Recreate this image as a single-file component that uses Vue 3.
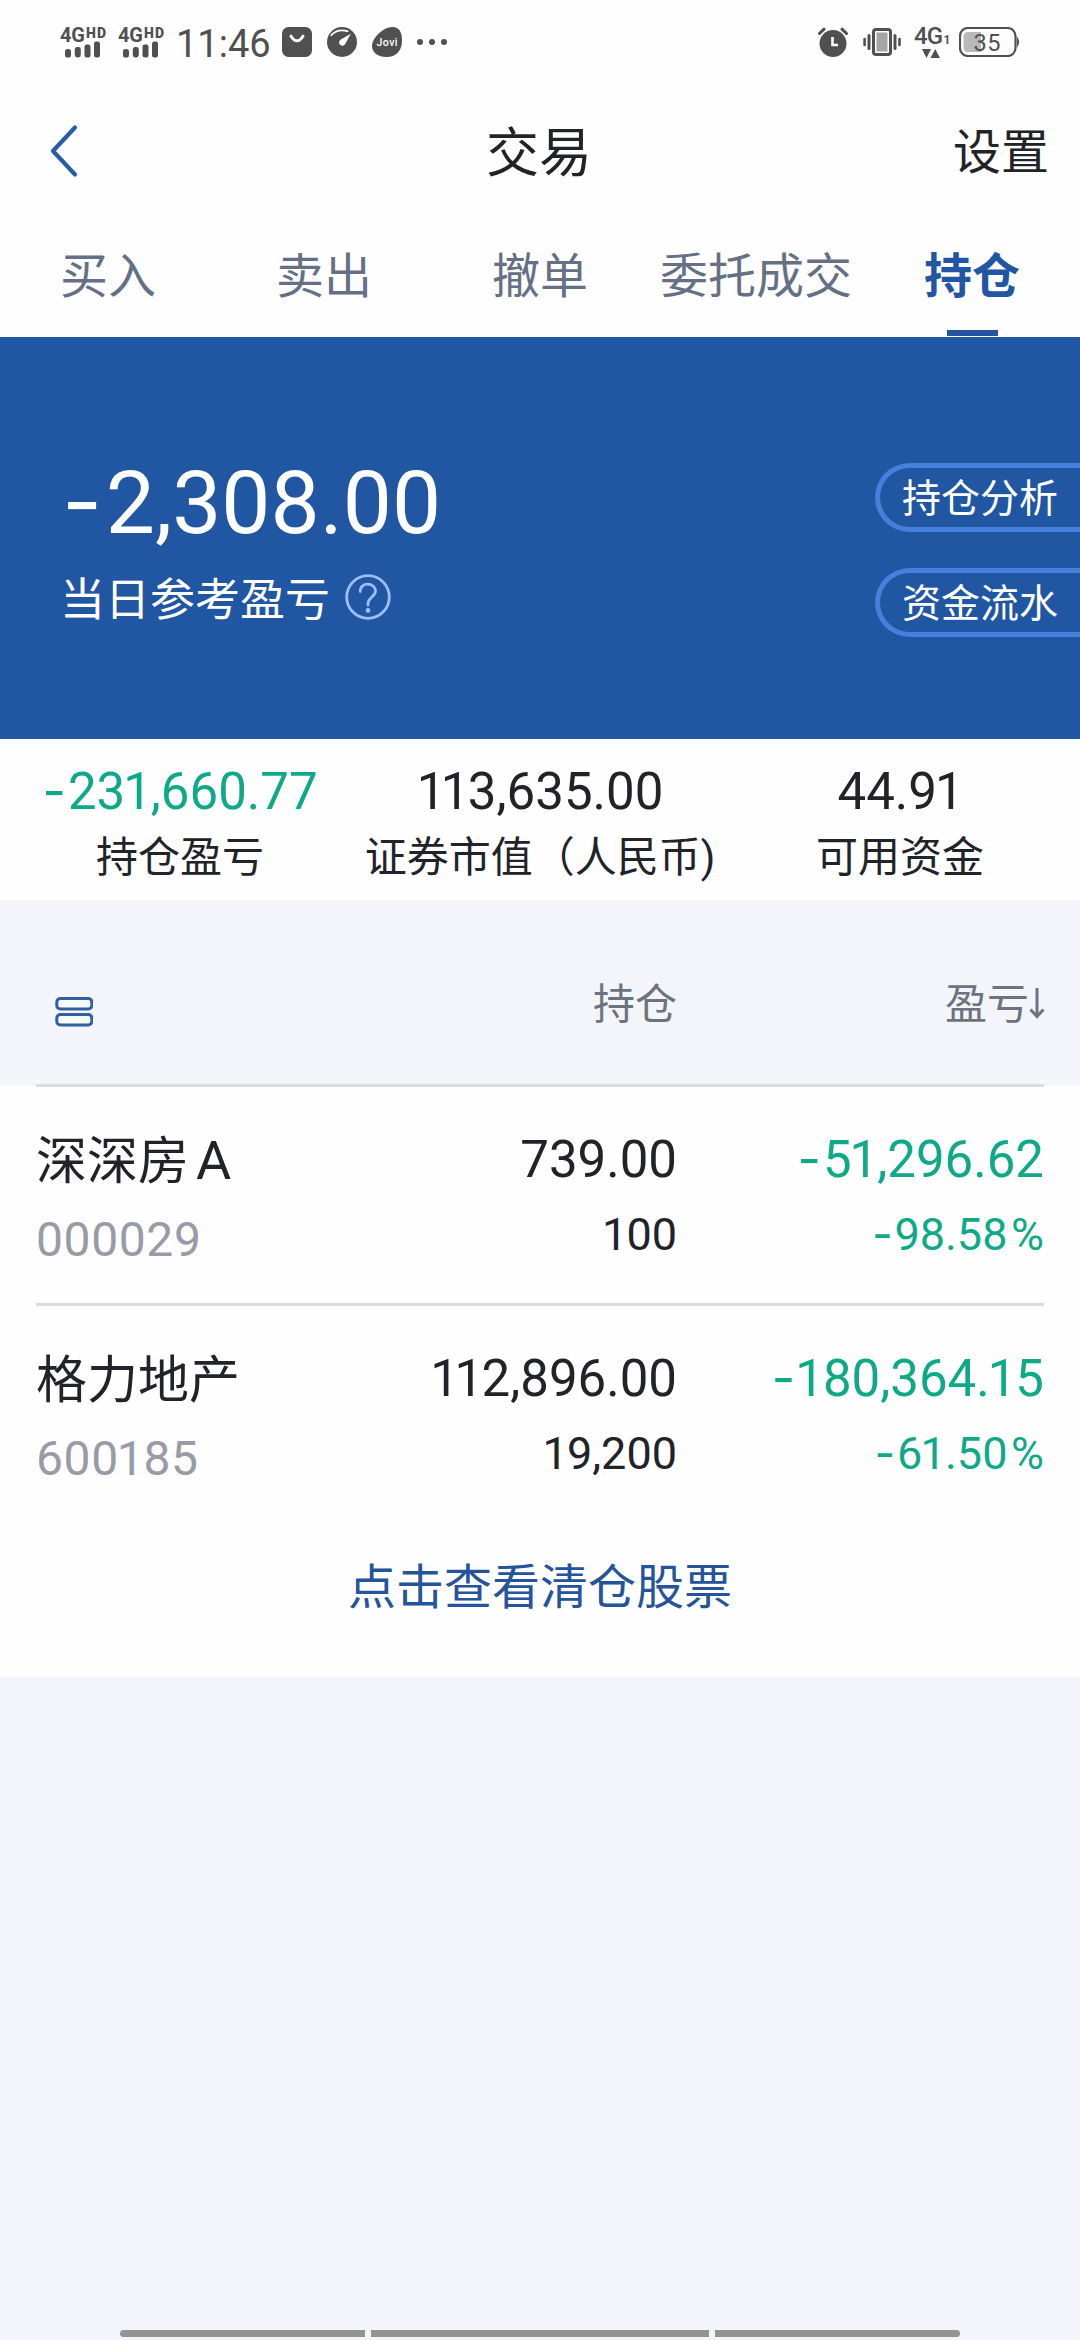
<script setup>
import { h } from 'vue'

const glyphClass = { '-': 'num-minus', '1': 'num-one', '11': 'num-ones', '%': 'num-percent' }

// Splits an amount so that the minus sign, the percent sign and the narrow "1" get their own metrics.
const Num = (props) =>
  h(
    'span',
    { class: 'num' },
    props.value
      .split(/(-|%|1+)/)
      .filter(Boolean)
      .map((part) => (glyphClass[part] ? h('span', { class: glyphClass[part] }, part) : part))
  )
Num.props = ['value']

const tabs = ['买入', '卖出', '撤单', '委托成交', '持仓']
const activeTab = '持仓'

const actions = ['持仓分析', '资金流水']

const stats = [
  { value: '-231,660.77', label: '持仓盈亏', loss: true },
  { value: '113,635.00', label: '证券市值（人民币)' },
  { value: '44.91', label: '可用资金' }
]

const holdings = [
  { name: '深深房', suffix: 'A', code: '000029', amount: '739.00', shares: '100', profit: '-51,296.62', rate: '-98.58%' },
  { name: '格力地产', code: '600185', amount: '112,896.00', shares: '19,200', profit: '-180,364.15', rate: '-61.50%' }
]
</script>

<template>
  <div class="screen">
    <header class="status">
      <div class="status-left">
        <svg v-for="n in 2" :key="n" class="signal" width="48" height="42" viewBox="0 -4 48 42">
          <text x="0" y="17" font-size="20" font-weight="700" textLength="25">4G</text>
          <text x="26" y="12.500" font-size="14" font-weight="900" textLength="20">HD</text>
          <rect x="5" y="24" width="6" height="8.500" rx="2.600" />
          <rect x="14.800" y="22" width="6" height="10.500" rx="2.400" />
          <rect x="24.500" y="19.500" width="6" height="13" rx="2.200" />
          <rect x="34" y="16.500" width="6" height="16" rx="2.200" />
        </svg>
        <span class="clock">11:46</span>
        <svg class="bag" width="30" height="30" viewBox="0 0 30 30">
          <rect width="30" height="30" rx="6.500" />
          <path d="M9 9.200Q15 18.500 21 9.200" fill="none" stroke="#fff" stroke-width="3" stroke-linecap="round" />
        </svg>
        <svg class="gauge" width="30" height="30" viewBox="0 0 30 30">
          <circle cx="15" cy="15" r="15" />
          <path d="M4.300 8.200C9 2.800 15 2.600 20.500 4.200" fill="none" stroke="#fff" stroke-width="1.800" stroke-linecap="round" />
          <path d="M23.800 6.800 18.400 16.800A3.300 3.300 0 1 1 13.400 12.800Z" fill="#fff" />
        </svg>
        <svg class="jovi" width="30" height="30" viewBox="0 0 30 30">
          <path d="M20.500 0C27 0 30 5 30 13.500C30 24 24 30 14.500 30C6 30 0 25.500 0 19C0 11 11 0 20.500 0Z" />
          <text x="4.500" y="18.800" font-size="10.500" font-weight="500" textLength="21" fill="#fff">Jovi</text>
        </svg>
        <svg class="more" width="30" height="8" viewBox="0 0 30 8">
          <circle cx="3" cy="4" r="3" />
          <circle cx="15" cy="4" r="3" />
          <circle cx="27" cy="4" r="3" />
        </svg>
      </div>
      <div class="status-right">
        <svg class="alarm" width="30" height="30" viewBox="0 0 30 30">
          <circle cx="15" cy="16.500" r="13.500" />
          <path d="M1.500 6.500 6 2.200M28.500 6.500 24 2.200" stroke="#505050" stroke-width="3" stroke-linecap="round" />
          <path d="M14.500 10V18H20" fill="none" stroke="#fff" stroke-width="2.600" />
        </svg>
        <svg class="vibrate" width="38" height="30" viewBox="0 0 38 30">
          <rect x="10.500" y="2.500" width="17" height="25" rx="2.500" fill="#fff" stroke="#505050" stroke-width="3" />
          <rect x="13.500" y="5.500" width="11" height="19" fill="#a5a5a5" />
          <path d="M6 8.500V21.500M32 8.500V21.500" stroke="#505050" stroke-width="3" stroke-linecap="round" />
          <path d="M1.600 12V18M36.500 12V18" stroke="#505050" stroke-width="2.600" stroke-linecap="round" />
        </svg>
        <svg class="network" width="38" height="46" viewBox="0 -6 38 46">
          <text x="0" y="18.500" font-size="24" font-weight="500" textLength="29">4G</text>
          <text x="29.500" y="18.500" font-size="12" font-weight="700">1</text>
          <path d="M8 24H17L12.500 33ZM16.500 33H26L21.200 24Z" />
        </svg>
        <svg class="battery" width="61" height="30" viewBox="0 0 61 30">
          <rect x="1" y="1" width="55.500" height="28" rx="8" fill="#fff" stroke="#505050" stroke-width="2.200" />
          <path d="M9 5H22V25H9Q4.500 25 4.500 20V10Q4.500 5 9 5Z" fill="#b9b9b9" />
          <path d="M58.500 11.500Q60.500 15 58.500 18.500Z" stroke="#505050" stroke-width="1.200" />
          <text x="14.500" y="23.500" font-size="23.500" textLength="27">35</text>
        </svg>
      </div>
    </header>

    <nav class="titlebar">
      <svg class="back" width="30" height="54" viewBox="0 0 30 54">
        <path d="M26 3.500 4 27 26 50.500" fill="none" stroke="#2a5ca5" stroke-width="4.200" stroke-linecap="round" stroke-linejoin="round" />
      </svg>
      <h1 class="title">交易</h1>
      <span class="settings">设置</span>
    </nav>

    <div class="tabs">
      <div v-for="tab in tabs" :key="tab" class="tab" :class="{ active: tab === activeTab }">
        <span>{{ tab }}</span>
      </div>
    </div>

    <section class="hero">
      <div class="today">
        <div class="today-value"><Num value="-2,308.00" /></div>
        <div class="today-label">
          <span>当日参考盈亏</span>
          <svg width="46" height="46" viewBox="0 0 46 46" fill="none" stroke="#9dbdf5" stroke-width="2.800">
            <circle cx="23" cy="23" r="21.300" />
            <path d="M15.200 17.500C15.200 7.500 30.500 8 30.500 17.200C30.500 22.500 23 23.500 23 29.500V31.200" stroke-linecap="round" />
            <circle cx="23" cy="36.500" r="2.400" fill="#9dbdf5" stroke="none" />
          </svg>
        </div>
      </div>
      <div class="actions">
        <div v-for="action in actions" :key="action" class="action">{{ action }}</div>
      </div>
    </section>

    <section class="stats">
      <div v-for="stat in stats" :key="stat.label" class="stat">
        <div class="stat-value" :class="{ loss: stat.loss }"><Num :value="stat.value" /></div>
        <div class="stat-label">{{ stat.label }}</div>
      </div>
    </section>

    <section class="thead">
      <svg class="layout-icon" width="38" height="30" viewBox="0 0 38 30" fill="#f7faff" stroke="#345f9f" stroke-width="3">
        <rect x="1.800" y="1.500" width="35" height="10.500" rx="3.500" />
        <rect x="1.800" y="17.500" width="35" height="10.500" rx="3.500" />
      </svg>
      <span class="th">持仓</span>
      <span class="th sort">
        盈亏<svg width="16" height="32" viewBox="0 0 16 32" fill="none" stroke="#6c7380" stroke-width="3">
          <path d="M8 1V29M1.500 22.500 8 29.500 14.500 22.500" />
        </svg>
      </span>
    </section>

    <section class="list">
      <article v-for="item in holdings" :key="item.code" class="row">
        <div class="cell cell-name">
          <div class="name">{{ item.name }}<span v-if="item.suffix" class="suffix">{{ item.suffix }}</span></div>
          <div class="code"><Num :value="item.code" /></div>
        </div>
        <div class="cell cell-num">
          <div class="primary"><Num :value="item.amount" /></div>
          <div class="secondary"><Num :value="item.shares" /></div>
        </div>
        <div class="cell cell-num loss">
          <div class="primary"><Num :value="item.profit" /></div>
          <div class="secondary"><Num :value="item.rate" /></div>
        </div>
      </article>
      <div class="cleared">点击查看清仓股票</div>
    </section>

    <footer class="gesture"><i></i><i></i><i></i></footer>
  </div>
</template>

<style>
body {
  background: #f4f4fd;
}

.num {
  font-family: Roboto, "Noto Sans CJK SC", sans-serif;
  white-space: nowrap;
}

.num-minus {
  margin-right: 0.04em;
  font-family: Inter, sans-serif;
  line-height: 0;
}

.num-one {
  margin-left: -0.04em;
  margin-right: -0.02em;
}

.num-ones {
  letter-spacing: -0.09em;
  margin-right: 0.06em;
}

.num-percent {
  margin-left: 0.08em;
}
</style>

<style scoped>
.screen {
  display: flex;
  flex-direction: column;
  width: 1080px;
  height: 2340px;
  overflow: hidden;
  background: #f4f4fd;
  color: #212329;
  font-family: Roboto, "Noto Sans CJK SC", sans-serif;
}

.status {
  display: flex;
  justify-content: space-between;
  height: 84px;
  padding: 0 60px;
  background: #fefefe;
  color: #505050;
}

.status svg {
  fill: #505050;
  flex: none;
}

.status-left,
.status-right {
  display: flex;
  align-items: center;
}

.signal {
  margin-right: 10px;
}

.clock {
  width: 92px;
  margin: 3px 14px 0 0;
  font-size: 38px;
  line-height: 44px;
}

.bag,
.gauge,
.jovi,
.alarm {
  margin-right: 15px;
}

.vibrate {
  margin-right: 13px;
}

.network {
  margin-right: 7px;
}

.titlebar {
  display: grid;
  grid-template-columns: 1fr auto 1fr;
  align-items: center;
  height: 136px;
  padding: 0 31px 0 49px;
  background: #fefefe;
}

.back {
  margin-bottom: 3px;
}

.title {
  margin: 0;
  padding: 4px 20px 0 0;
  font-size: 53px;
  font-weight: 400;
  line-height: 70px;
}

.settings {
  justify-self: end;
  margin-top: 2px;
  font-size: 48px;
  line-height: 70px;
}

.tabs {
  display: grid;
  grid-template-columns: repeat(5, 216px);
  height: 117px;
  background: #fefefe;
}

.tab {
  display: flex;
  flex-direction: column;
  align-items: center;
  justify-content: space-between;
  padding-top: 22px;
  color: #667085;
  font-size: 48px;
  line-height: 70px;
  white-space: nowrap;
}

.tab.active {
  color: #2156a2;
  font-weight: 700;
}

.tab.active::after {
  content: "";
  width: 51px;
  height: 6px;
  margin-bottom: 1px;
  background: #24559e;
}

.hero {
  display: flex;
  justify-content: space-between;
  height: 402px;
  background: #2156a2;
  color: #fff;
}

.today {
  padding: 114px 0 0 60px;
}

.today-value {
  padding-left: 2px;
  font-size: 87.5px;
  line-height: 104px;
}

.today-label {
  display: flex;
  align-items: center;
  gap: 15px;
  margin-top: 14px;
  font-size: 45px;
  line-height: 60px;
}

.today-label span {
  padding-top: 2px;
}

.today-label svg {
  margin-bottom: 6px;
}

.actions {
  display: flex;
  flex-direction: column;
  gap: 36px;
  width: 205px;
  padding-top: 126px;
}

.action {
  box-sizing: border-box;
  height: 69px;
  padding-left: 22px;
  border: 5px solid #4680dc;
  border-right: 0;
  border-radius: 35px 0 0 35px;
  font-size: 39px;
  line-height: 62px;
  white-space: nowrap;
}

.stats {
  display: grid;
  grid-template-columns: repeat(3, 360px);
  height: 161px;
  background: #fefefe;
  text-align: center;
}

.stat-value {
  padding-top: 23px;
  font-size: 51px;
  line-height: 60px;
}

.stat-label {
  margin-top: 6px;
  font-size: 42px;
  line-height: 60px;
  white-space: nowrap;
}

.loss {
  color: #0eaa88;
}

.thead {
  display: grid;
  grid-template-columns: 284px 338px 368px;
  align-items: center;
  box-sizing: border-box;
  height: 185px;
  padding: 24px 35px 0 55px;
  background: #f4f5fa;
}

.layout-icon {
  margin-top: 14px;
}

.th {
  color: #6c7380;
  font-size: 42px;
  line-height: 60px;
  text-align: right;
}

.sort {
  white-space: nowrap;
}

.list {
  height: 592px;
  background: #fefefe;
}

.row {
  display: grid;
  grid-template-columns: 300px 341px 367px;
  box-sizing: border-box;
  height: 219px;
  margin: 0 36px;
  border-top: 3px solid #d9dcdf;
}

.row:first-child {
  margin-top: -1px;
}

.cell-num {
  text-align: right;
}

.name {
  padding-top: 38px;
  font-size: 51px;
  line-height: 74px;
  white-space: nowrap;
}

.suffix {
  margin-left: 7px;
  font-size: 54px;
  line-height: 60px;
}

.code {
  margin-top: 11px;
  color: #989ba5;
  font-size: 48px;
  line-height: 60px;
  letter-spacing: 0.6px;
}

.primary {
  padding-top: 43px;
  font-size: 51px;
  line-height: 60px;
}

.secondary {
  margin-top: 17px;
  font-size: 45px;
  line-height: 56px;
}

.cleared {
  padding-top: 31px;
  color: #25549b;
  font-size: 48px;
  line-height: 70px;
  text-align: center;
}

.gesture {
  display: grid;
  grid-template-columns: 245px 338px 245px;
  gap: 6px;
  width: 840px;
  height: 7px;
  margin: auto auto 3px;
}

.gesture i {
  background: #949494;
}

.gesture i:first-child {
  border-radius: 4px 0 0 4px;
}

.gesture i:last-child {
  border-radius: 0 4px 4px 0;
}
</style>
